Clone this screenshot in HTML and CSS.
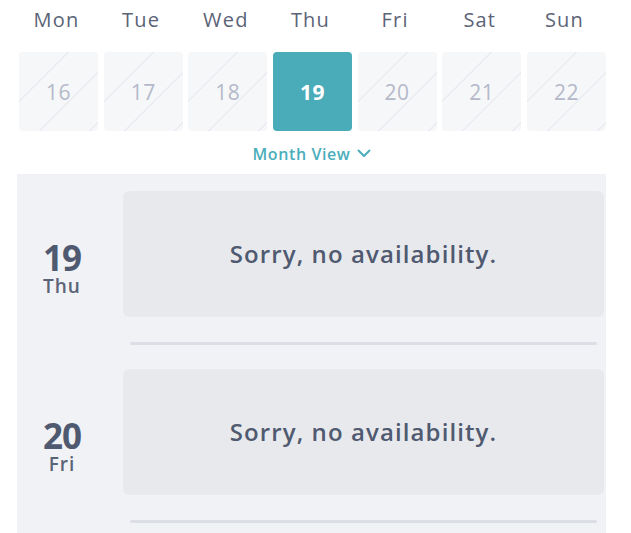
FILE: index.html
```html
<!DOCTYPE html>
<html lang="en">
<head>
<meta charset="utf-8">
<title>Availability</title>
<link rel="stylesheet" href="styles.css">
</head>
<body>
<div class="wrap">
  <div class="week">
    <div class="dname">Mon</div>
    <div class="dname">Tue</div>
    <div class="dname">Wed</div>
    <div class="dname">Thu</div>
    <div class="dname">Fri</div>
    <div class="dname">Sat</div>
    <div class="dname">Sun</div>
    <div class="cell">16</div>
    <div class="cell">17</div>
    <div class="cell">18</div>
    <div class="cell active">19</div>
    <div class="cell">20</div>
    <div class="cell">21</div>
    <div class="cell">22</div>
  </div>
  <div class="monthview">
    <span>Month View</span>
    <svg class="chev" width="14" height="9" viewBox="0 0 14 9"><path d="M1.5 1.5 L7 7 L12.5 1.5" fill="none" stroke="#4aaebb" stroke-width="2" stroke-linecap="round" stroke-linejoin="round"/></svg>
  </div>
  <div class="panel">
    <div class="row">
      <div class="date"><div class="num">19</div><div class="wd">Thu</div></div>
      <div class="main">
        <div class="card">Sorry, no availability.</div>
        <div class="divider"></div>
      </div>
    </div>
    <div class="row">
      <div class="date"><div class="num">20</div><div class="wd">Fri</div></div>
      <div class="main">
        <div class="card">Sorry, no availability.</div>
        <div class="divider"></div>
      </div>
    </div>
  </div>
</div>
</body>
</html>
```
FILE: styles.css
```css
html, body {
  margin: 0;
  padding: 0;
  background: #ffffff;
  font-family: "Open Sans", "Noto Sans", sans-serif;
}
.wrap {
  width: 589px;
  margin-left: 17px;
  height: 533px;
  overflow: hidden;
}
.week {
  display: grid;
  grid-template-columns: repeat(7, 79px);
  justify-content: space-between;
  padding-left: 2px;
  row-gap: 12px;
}
.dname {
  height: 40px;
  line-height: 40px;
  text-align: center;
  font-size: 20px;
  font-weight: 500;
  letter-spacing: 1.2px;
  color: #5b6377;
  margin-left: -4px;
}
.cell {
  height: 79px;
  border-radius: 4px;
  display: flex;
  align-items: center;
  justify-content: center;
  font-size: 21px;
  font-weight: 500;
  letter-spacing: 0.5px;
  color: #b4b9c9;
  background-color: #f6f7f9;
  background-image: repeating-linear-gradient(135deg, #f6f7f9 0px, #f6f7f9 34px, #eaecf1 34px, #eaecf1 35.5px);
}
.cell.active {
  background: #4aabb9;
  color: #ffffff;
  font-weight: 700;
}
.monthview {
  height: 43px;
  box-sizing: border-box;
  padding-top: 13px;
  display: flex;
  justify-content: center;
  align-items: flex-start;
  gap: 6px;
  color: #4aaebb;
  font-size: 16px;
  font-weight: 600;
  letter-spacing: 0.6px;
  line-height: 20px;
}
.chev {
  margin-top: 5px;
}
.panel {
  background: #f1f2f6;
  padding: 17px 2px 20px 0;
}
.row {
  display: flex;
  margin-bottom: 24px;
}
.date {
  width: 90px;
  margin-right: 16px;
  display: flex;
  flex-direction: column;
  align-items: center;
  justify-content: center;
  color: #4f5a70;
}
.num {
  font-size: 35px;
  font-weight: 700;
  line-height: 36px;
  letter-spacing: -1px;
}
.wd {
  font-size: 19px;
  font-weight: 600;
  line-height: 20px;
  letter-spacing: 1px;
  color: #5b6377;
}
.main {
  flex: 1;
}
.card {
  height: 126px;
  background: #e8e9ed;
  border-radius: 6px;
  display: flex;
  align-items: center;
  justify-content: center;
  font-size: 24px;
  font-weight: 600;
  letter-spacing: 1.1px;
  color: #4f5a70;
  padding-bottom: 2px;
  box-sizing: border-box;
}
.divider {
  height: 3px;
  margin: 25px 7px 0 7px;
  background: #dcdee5;
  border-radius: 2px;
}
```
